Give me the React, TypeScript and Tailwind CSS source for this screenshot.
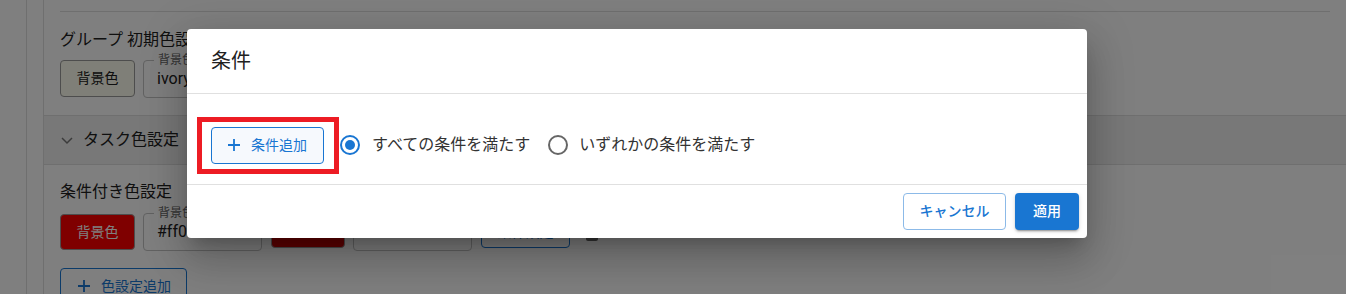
import React from "react";

function Field({ label, value, w }: { label: string; value: string; w: string }) {
  return (
    <div className={`relative h-[38px] shrink-0 ${w} rounded border border-[#c4c4c4]`}>
      <span className="absolute -top-[7px] left-[10px] bg-white px-[4px] text-[12px] leading-[12px] text-[#666666]">
        {label}
      </span>
      <div className="pl-[13px] pt-[8px] text-[16px] leading-[20px] text-[#212121]">{value}</div>
    </div>
  );
}

function RadioIcon({ checked }: { checked: boolean }) {
  return (
    <svg width="24" height="24" viewBox="0 0 24 24" className="shrink-0">
      <circle
        cx="12"
        cy="12"
        r="9"
        fill="none"
        stroke={checked ? "#1976d2" : "#666666"}
        strokeWidth="2"
      />
      {checked && <circle cx="12" cy="12" r="5" fill="#1976d2" />}
    </svg>
  );
}

function Plus({ color }: { color: string }) {
  return (
    <svg width="20" height="20" viewBox="0 0 20 20" className="shrink-0">
      <path d="M10 4v12M4 10h12" stroke={color} strokeWidth="1.8" fill="none" />
    </svg>
  );
}

export default function App() {
  return (
    <div className="relative h-[294px] w-[1346px] overflow-hidden bg-white font-['Roboto','Noto_Sans_CJK_JP',sans-serif] text-[#212121]">
      {/* background page */}
      <div className="flex h-full">
        <div className="w-[27px] shrink-0 border-r border-[#dedede]" />
        <div className="w-[17px] shrink-0 border-r border-[#dedede]" />
        <div className="min-w-0 flex-1">
          {/* group section */}
          <div className="px-4">
            <div className="mt-[11px] border-t border-[#dedede] pt-4">
              <div className="text-[16px] leading-[24px]">グループ 初期色設定</div>
              <div className="mt-2 flex items-start gap-2 pb-[17px]">
                <div className="flex h-[37px] w-[75px] shrink-0 items-center justify-center rounded border border-[#9a9a9a] bg-[#fffff0] text-[14px] text-[#212121]">
                  背景色
                </div>
                <Field label="背景色" value="ivory" w="w-[119px]" />
              </div>
            </div>
          </div>
          {/* accordion header */}
          <div className="flex h-[50px] items-center border-y border-[#dedede] bg-[#f0f0f0] px-4">
            <svg width="14" height="14" viewBox="0 0 14 14" className="shrink-0">
              <path d="M2 5l5 5 5-5" stroke="#777777" strokeWidth="1.5" fill="none" />
            </svg>
            <span className="ml-[9px] text-[16px] leading-[24px]">タスク色設定</span>
          </div>
          {/* conditional color section */}
          <div className="px-4 pt-[15px]">
            <div className="text-[16px] leading-[24px]">条件付き色設定</div>
            <div className="mt-[9px] flex items-center gap-2">
              <div className="flex h-[36px] w-[75px] shrink-0 items-center justify-center rounded border border-[#9a9a9a] bg-[#ff0000] text-[14px] text-white">
                背景色
              </div>
              <Field label="背景色" value="#ff0000ff" w="w-[119px]" />
              <div className="ml-px h-[32px] w-[74px] shrink-0 rounded border border-[#9a9a9a] bg-[#c00000]" />
              <Field label="文字色" value="#ffffffff" w="w-[119px]" />
              <div className="ml-px flex h-[32px] w-[89px] shrink-0 items-center justify-center rounded border border-[#1976d2] text-[14px] text-[#1976d2]">
                条件設定
              </div>
              <svg width="24" height="24" viewBox="0 0 24 24" className="ml-[2px] shrink-0">
                <path
                  d="M6 19c0 1.1.9 2 2 2h8c1.1 0 2-.9 2-2V7H6v12zM19 4h-3.5l-1-1h-5l-1 1H5v2h14V4z"
                  fill="#666666"
                />
              </svg>
            </div>
            <div className="mt-[17px] flex h-[36px] w-[127px] items-center rounded border border-[#1976d2] pl-[13px] text-[14px] text-[#1976d2]">
              <Plus color="#1976d2" />
              <span className="ml-[7px]">色設定追加</span>
            </div>
          </div>
        </div>
      </div>

      {/* backdrop */}
      <div className="absolute inset-0 bg-black/50" />

      {/* dialog */}
      <div className="absolute left-[187px] top-[29px] w-[900px] rounded bg-white shadow-[0px_11px_15px_-7px_rgba(0,0,0,0.2),0px_24px_38px_3px_rgba(0,0,0,0.14),0px_9px_46px_8px_rgba(0,0,0,0.12)]">
        <div className="flex h-[64px] items-center px-6 text-[20px] leading-[32px] text-[#212121]">
          条件
        </div>
        <div className="border-y border-[#e0e0e0] px-6 pb-[18px] pt-[30px]">
          <div className="flex h-[42px] items-center">
            <div className="relative">
              <div className="flex h-[37px] w-[113px] items-center rounded border border-[#1976d2] bg-[#f6f9fd] pl-[12px] text-[14px] text-[#1976d2]">
                <Plus color="#1976d2" />
                <span className="ml-[7px] leading-[20px]">条件追加</span>
              </div>
              <span className="absolute -bottom-[10px] -left-[14px] -right-[15px] -top-[10px] border-[5px] border-[#ed1c24]" />
            </div>
            <div className="ml-[14px] flex items-center">
              <RadioIcon checked />
              <span className="ml-[10px] text-[16px] leading-[24px] text-[#333333]">すべての条件を満たす</span>
            </div>
            <div className="ml-[16px] flex items-center">
              <RadioIcon checked={false} />
              <span className="ml-[9px] text-[16px] leading-[24px] text-[#333333]">いずれかの条件を満たす</span>
            </div>
          </div>
        </div>
        <div className="flex items-center justify-end gap-[9px] p-2">
          <div className="flex h-[37px] w-[103px] items-center justify-center rounded border border-[#8cbae8] text-[14px] font-medium text-[#1976d2]">
            キャンセル
          </div>
          <div className="flex h-[37px] w-[64px] items-center justify-center rounded bg-[#1976d2] text-[14px] font-medium text-white shadow-[0px_3px_1px_-2px_rgba(0,0,0,0.2),0px_2px_2px_0px_rgba(0,0,0,0.14),0px_1px_5px_0px_rgba(0,0,0,0.12)]">
            適用
          </div>
        </div>
      </div>
    </div>
  );
}
